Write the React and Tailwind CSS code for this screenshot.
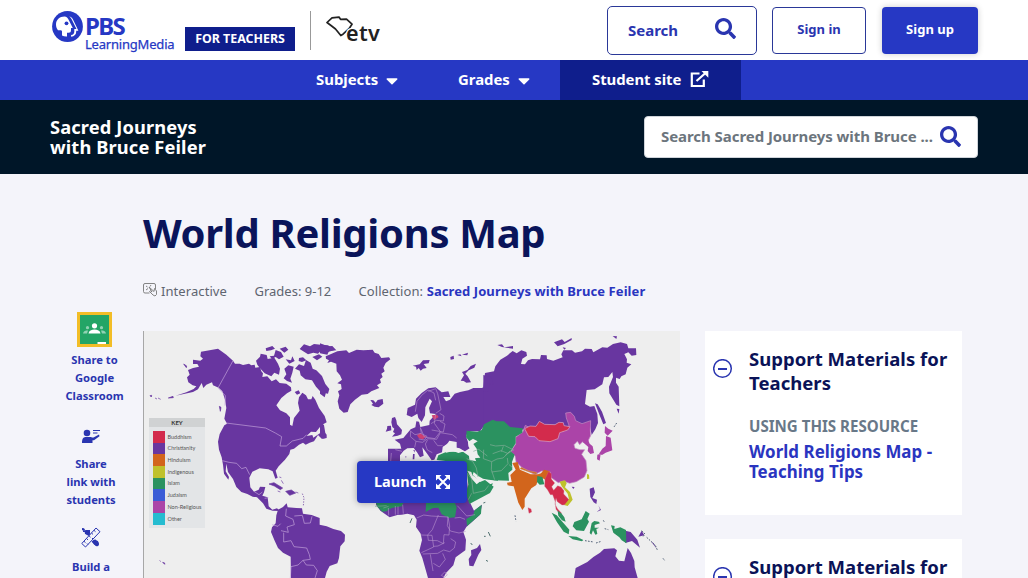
import React from 'react';
import { FaSearch, FaCaretDown } from 'react-icons/fa';

const legend = [
  { name: 'Buddhism', color: 'bg-[#d32b4c]' },
  { name: 'Christianity', color: 'bg-[#6836a0]' },
  { name: 'Hinduism', color: 'bg-[#d2651c]' },
  { name: 'Indigenous', color: 'bg-[#bfc12c]' },
  { name: 'Islam', color: 'bg-[#2b9260]' },
  { name: 'Judaism', color: 'bg-[#3a5cd6]' },
  { name: 'Non-Religious', color: 'bg-[#ab44a8]' },
  { name: 'Other', color: 'bg-[#25bcd0]' },
];

const PbsMark = () => (
  <svg className="h-[31px] w-[31px] shrink-0" viewBox="0 0 31 31">
    <circle cx="15.5" cy="15.5" r="15.4" fill="#2638c4" />
    <path d="M12.500 5.500C7.500 5.500 4 9 4 13.500c0 2.500.8 4.200 2 5.800h2.500c1 0 1.500.5 1.500 1.500v3.700c1.500.7 3 1 5 .9v-3.600h1.500c1.800 0 2.500-.8 2.500-2.500v-2.200h1.800l-3.800-7.600C15.800 7 14.500 5.500 12.500 5.500z" fill="#fff" />
    <path d="M16.600 5.300c1.700.6 2.600 2 3.400 3.600l4.500 9.100h-2.200v2.500c0 2-1 3.200-3.200 3.600v1.700c3.400-.5 5.100-2.200 5.100-5v-1h2.200L21.500 9.500c-1.100-2.300-2.500-4.100-4.900-4.200z" fill="#fff" />
    <circle cx="14.500" cy="12.300" r="1.900" fill="#2638c4" />
  </svg>
);

const EtvLogo = () => (
  <div className="relative ml-[15px] h-[30px] w-[56px]">
    <svg className="absolute left-0 top-[2px] h-[22px] w-[28px]" viewBox="0 0 28 22">
      <path d="M1 6.500L6 1.800l7-.7 1.500 2.200 6-.1 5.500 5-3 4.500-6 5.500-2.200 1.300L9.500 13 5 9.500z" fill="none" stroke="#222" strokeWidth="1.700" strokeLinejoin="round" />
    </svg>
    <span className="absolute left-[20px] top-[7px] bg-transparent text-[21.500px] font-semibold leading-[24px] tracking-[0.300px] text-[#222] [text-shadow:-1px_-1px_0_#fff]">etv</span>
  </div>
);

const Header = () => (
  <header className="flex h-[60px] bg-white pl-[52px] pr-[50px]">
    <div className="flex w-[123px] pt-[11px] text-[#2638c4]">
      <PbsMark />
      <div className="ml-[2px]">
        <p className="h-[26px] pt-[4px] text-[24px] font-bold leading-[22px] tracking-[-1.700px]">PBS</p>
        <p className="text-[13px] leading-[14px] tracking-[-0.200px] [-webkit-text-stroke:0.250px_#2638c4]">LearningMedia</p>
      </div>
    </div>
    <span className="ml-[10px] mt-[27px] flex h-[24px] w-[110px] items-center justify-center bg-[#0f1e8c] text-[12.400px] font-bold text-white">FOR TEACHERS</span>
    <span className="ml-[15px] mt-[11px] h-[39px] w-px bg-[#999]" />
    <div className="pt-[14px]"><EtvLogo /></div>
    <div className="ml-auto flex">
      <button className="mt-[6px] flex h-[49px] w-[150px] items-center justify-between rounded-[5px] border border-[#2a3898] pl-[20px] pr-[20px] text-[15px] font-bold text-[#2a35b0]">
        Search
        <FaSearch className="mb-[4px] h-[21px] w-[21px]" />
      </button>
      <button className="ml-[15px] mt-[7px] h-[47px] w-[94px] rounded-[4px] border border-[#2a3898] pb-[2px] text-[13px] font-bold text-[#2a35b0]">Sign in</button>
      <button className="ml-[16px] mt-[7px] h-[47px] w-[96px] rounded-[4px] bg-[#2638c4] pb-[2px] text-[13px] font-bold text-white shadow-[0_0_6px_rgba(0,0,0,0.2)]">Sign up</button>
    </div>
  </header>
);

const Navbar = () => (
  <nav className="flex h-[40px] bg-[#2638c4] pl-[316px] text-[14.900px] font-bold text-white">
    <div className="flex w-[142px] items-center pb-[2px]">
      Subjects <FaCaretDown className="ml-[5px] mt-[3px] h-[19px] w-[18px]" />
    </div>
    <div className="flex w-[102px] items-center pb-[2px]">
      Grades <FaCaretDown className="ml-[5px] mt-[3px] h-[19px] w-[18px] shrink-0" />
    </div>
    <div className="flex w-[181px] items-center bg-[#0f1e8c] pb-[2px] pl-[32px] tracking-[-0.050px]">
      Student site
      <svg className="ml-[9px] h-[18px] w-[20px]" viewBox="0 0 20 18" fill="none" stroke="#fff" strokeWidth="2.200">
        <path d="M9.500 3.500H1.800v12.500h12V9.500M6.500 11L15.500 3" />
        <path d="M11.500 1h6.800v6.800z" fill="#fff" stroke="none" />
      </svg>
    </div>
  </nav>
);

const CollectionBar = () => (
  <section className="flex h-[74px] items-start justify-between bg-[#001628] pl-[50px] pr-[50px]">
    <h2 className="mt-[17px] text-[18.300px] font-bold leading-[20px] tracking-[0.120px] text-white">
      Sacred Journeys<br />with Bruce Feiler
    </h2>
    <div className="mt-[16px] flex h-[42px] w-[334px] items-center rounded-[4px] border border-[#cfd4da] bg-white pb-[2px] pl-[16px] text-[15px] font-bold tracking-[-0.060px] text-[#6c757d]">
      <span className="w-[272px] whitespace-nowrap">Search Sacred Journeys with Bruce ...</span>
      <FaSearch className="ml-[7px] h-[21px] w-[21px] shrink-0 text-[#2a35b0]" />
    </div>
  </section>
);

const ShareTools = () => (
  <aside className="mt-[138px] flex w-[143px] flex-col text-center text-[11.200px] font-bold leading-[18px] text-[#2a35b0]">
    <div className="ml-[47px] flex w-[95px] flex-col items-center">
      <svg className="h-[35px] w-[35px]" viewBox="0 0 35 35">
        <path d="M0 0h35v35H0z" fill="#f2bd27" />
        <path d="M3 3h29v29H3z" fill="#23a566" />
        <g fill="#fff">
          <circle cx="17.500" cy="13.800" r="2.600" />
          <path d="M11.500 21.500c.5-3 3-4 6-4s5.500 1 6 4z" />
          <path d="M20.500 30h8.500v2h-8.500z" />
          <g opacity=".5">
            <circle cx="10.500" cy="15.700" r="1.600" />
            <circle cx="24.500" cy="15.700" r="1.600" />
            <path d="M6 21.500c.4-2.500 2.500-3 5-3l-1 3zM29 21.500c-.4-2.500-2.500-3-5-3l1 3z" />
          </g>
        </g>
      </svg>
      <p className="mt-[4px]">Share to<br />Google<br />Classroom</p>
    </div>
    <div className="ml-[43px] mt-[24px] flex w-[96px] flex-col items-center">
      <svg className="h-[15px] w-[18px]" viewBox="0 0 18 15" fill="#2a35b0">
        <circle cx="5" cy="4" r="3.300" />
        <path d="M0 14c0-4 1-6 4-6h4c1.500 0 2 .8 3.500.5L17 5.500l.5 1.700-5.500 4H10.500V14z" />
        <path d="M11 1.500h7M11 4h4.500" stroke="#2a35b0" strokeWidth="1" />
      </svg>
      <p className="mt-[11px]">Share<br />link with<br />students</p>
    </div>
    <div className="ml-[43px] mt-[17px] flex w-[96px] flex-col items-center">
      <svg className="h-[22px] w-[20px]" viewBox="0 0 20 22" fill="#2a35b0">
        <path d="M1 2l2 .2 1 1.600L2.800 5 1 4zM5 4h4v3.500L7 9 4 8V6H2V5zM13 14l4 1 1 4-2 1.500-3-2-2-3z" />
        <path d="M.8 17.500L15 2l4 3.700L4.500 21z" fill="#f4f4fa" stroke="#2a35b0" strokeWidth="1" />
        <path d="M3 15.300l1.500 1.300M5.500 12.500l1.500 1.400M8 9.800l1.500 1.400M10.500 7l1.500 1.400M13 4.300l1.500 1.400M7 18.500l-1-1M12 13l-1-1" stroke="#2a35b0" strokeWidth="1" />
        <path d="M5 4l4.500 4-2 2-4-3zM10.500 15.500c1 0 2.500-2.500 4-2l3.500 3.500-1 3h-2z" />
      </svg>
      <p className="mt-[10px]">Build a<br />Lesson</p>
    </div>
  </aside>
);

// 3 units per pixel; the inner groups shift Europe/Africa and Asia to their place
const WorldMap = () => (
  <svg className="block h-[247px] w-[537px]" viewBox="0 9 1611 741" strokeLinejoin="round">
    <g fill="#6836a0">
      <path d="M98 203L130 193 152 183 160 175 149 172 136 163 132 148 140 140 135 126 150 120 168 116 163 108 150 108 150 95 172 98 180 92 172 85 174 71 225 62 250 80 270 98 276 107 290 107 300 111 318 107 325 112 335 110 337 119 351 117 355 130 360 136 358 147 373 145 386 160 399 154 410 165 430 167 444 178 445 188 432 196 415 210 400 232 411 247 430 256 441 268 441 290 448 294 453 270 470 248 465 225 468 208 478 194 489 202 495 214 505 214 509 204 517 215 528 240 545 264 551 283 535 292 519 312 504 311 491 324 508 321 511 329 535 313 548 318 548 330 536 332 525 321 513 340 500 344 488 350 480 344 468 350 453 362 442 365 439 378 426 395 407 415 398 428 404 449 397 452 389 430 376 424 350 421 328 431 319 449 322 478 333 491 347 485 351 476 367 477 363 493 358 503 374 508 377 535 388 545 402 541 411 549 389 548 370 542 360 526 342 508 329 506 313 498 295 492 280 477 270 453 255 432 250 407 248 430 258 447 256 455 243 437 240 410 236 388 228 365 225 341 230 318 244 292 252 287 244 272 250 240 246 215 238 190 227 179 210 172 207 163 190 170 181 180 176 165 165 184 150 192Z" />
      <path d="M339 98l12-12 2-9 18 4 3 12 20-4 11 18 6 15-3 18-14-6-9 11-20-9-14-15-8-11zM368 61l20-7 8 8-12 5-14 2zM380 85l13-2 5-17 16 6 8 14-14 8-10-7-12 5zM410 62l18-6 8 9-12 9zM428 94l16 3 4-12 7 14-16 8zM470 63l13-14 18 6 12-7 20 2 22 2 20 14-30 9-12-6-8 8-14-3-16 5zM424 122l12-10 16 4-4 18-6 18 5 12-15-5-10-8 8-12zM456 122l12-13 15 5 6-18 14 8 6 18 11 5 17 17 10 24 12 15-4 14-21-4-15-17-12-19-20-3-14-12-3-14zM468 90l12-2 10 9-13 5-10-3zM508 87l20-8 10 7-16 11zM455 192l12-5 5 9-10 4z" />
      <path d="M122 108l9 6-1 5zM21 203l4 4 1-5zM36 210l6 3M45 210l8 4M76 210l14-5 1 4zM229 235l5 3-2 12zM50 697l3 4M59 703l6 2v4z" stroke="#6836a0" strokeWidth="2" />
      <path d="M378 468l15-4 26 16-7 5-18-11zM428 490l17-4 13 9-18 7zM404 489l8 3M458 492l8 3M409 447l6 2M415 457l6 10" stroke="#6836a0" strokeWidth="2" />
      <path d="M405 545L420 537 431 526 434 538 460 540 477 541 480 557 506 561 530 570 530 590 551 595 571 603 594 609 606 620 605 640 592 655 588 690 583 706 560 714 551 731 546 750 444 750 443 686 420 674 405 660 395 638 384 612 387 598 398 586 400 562Z" />
    </g>
    <path d="M478 497l5 12-2 25" fill="none" stroke="#8f6cb4" strokeWidth="3" strokeDasharray="4 4" />
    <g fill="none" stroke="#c4a5db" strokeWidth="2">
      <path d="M270 98L225 180 247 203 246 233M249 285L368 300 397 315 416 326 411 354 430 354 448 339 480 331 491 320M238 398l20 5 23 3 15 16 13-4 11 22M334 491l14 9 10-8M365 511l11-2M430 542l-2 22 22 10 4 16-22 7 4 16-22-5M454 564l24-2 6 24 18-1 5-20M387 590l18 5 8-8M422 614v28l22-4 9 18 38 4 8 20 3 14-22 3-15 14-21 5-2 35M480 697l10 14 22 1 11 16-7 22" />
    </g>
    <g transform="translate(531 0)">
      <g fill="#6836a0">
        <path d="M17 85L35 77 52 70 79 67 87 75 110 65 130 67 158 65 164 74 176 78 184 90 207 88 211 94 197 105 190 119 194 130 184 137 188 147 180 154 183 164 171 172 178 180 154 190 143 198 125 200 105 215 91 229 83 252 71 254 58 242 53 220 58 202 54 190 65 183 63 169 52 166 66 155 60 142 50 130 49 107 33 101 22 105 27 97 18 92Z" />
        <path d="M0 46l24 9 13-1 12 13-22 2-5 11-22-4zM0 157l6 12 14 17-6 22-14-11zM0 278l12 14 4 23 4 5v10l-12 2-8-9zM151 216l9 1 7 7 6-8 15-3 2 14-14 11-12-2-10-5 5-4zM278 113l21-4 10-12 20-1-3 10-15 2 9 12-11 2-7 6-6-8-6 6-2-10zM391 87l10-4 1 10-10 2zM412 81l9-2 4 6zM426 80l18-6-2 8zM422 158l10-16-6-10 16-6 10-12 16-7-5 12-17 8-10 10 7 8 10 18-14 1-8-5z" />
        <path d="M216 270l9-3 4 10 2 12 8 9 7 8-2 13-11 4-17 3 9-10-6-4 4-10-6-5-3-14zM202 294l11-1 1 14-17 4 4-9zM103 385l6 2M112 384l8 4" />
        {/* Europe down to the Mediterranean */}
        <path d="M260 261L263 240 285 230 288 212 305 195 325 181 347 178 365 193 385 190 391 207 370 207 378 220 390 215 404 197 420 192 445 187 460 180 485 180 530 165 540 280 495 290 480 310 445 310 438 325 445 345 450 360 435 370 410 360 410 342 388 338 380 350 368 358 366 373 350 379 343 395 335 397 322 378 307 358 311 383 300 388 291 373 281 360 262 361 251 368 240 382 240 400 204 400 204 362 244 362 240 347 224 335 250 330 272 304 286 298 289 280 297 281 301 297 328 291 329 278 347 258 330 256 327 240 336 220 329 212 316 238 315 262 305 282 295 270 292 257 275 267Z" />
        <path d="M256 385h3l-1 6M279 378h5l-1 16h-5zM280 366h4v8z" />
        <path d="M170 500L440 450 448 520 462 548 486 530 480 560 439 597 430 612 438 635 436 667 407 688 400 712 378 735 370 750 324 750 307 690 298 668 306 636 302 617 288 597 290 575 282 562 262 557 245 560 232 561 209 568 181 548 168 530Z" />
        <path d="M480 648l4 18-9 14-15 35-12-2-2-20 8-12-1-14 18-7z" />
      </g>
      <g fill="#2b9260">
        <path d="M355 382L380 371 430 372 447 384 448 396 470 400 490 392 515 370 540 400 534 458 506 455 489 452 476 445 461 432 458 440 480 462 495 456 521 476 510 495 448 528 438 495 445 470 440 425 430 405 350 396 Z" />
        <path d="M168 525h82l-5 10-30 5-16 10-12 1-15-15zM318 525h52l34-2 6 15-5 30-18 2-22-11-10-20-16 1-22 12zM439 573l20-12 5-14 21-17-2 27-27 24-15 13z" />
      </g>
      <g fill="#cf3e71">
        <path d="M291 322l10-7 8 7 10 3-10 9-12-3zM335 262l16-2 5 7-14 9z" />
      </g>
      <g fill="#eeeeee">
        <path d="M368 357l17-12 14 12 20 4 14 9-18 5-15-6-22 5zM442 428l12 4 3 10 25 17-12 10-15-17z" />
      </g>
      <g fill="none" stroke="#b994cf" strokeWidth="1.800">
        <path d="M286 251l5-31 14-18 19-16 18 9 5 22M325 190l22-8 6 15 10 48-16 11M347 258l-4 28 18 25-16 21-32-5-11-26M301 298l3 18-19 4-14-11M272 309l-1 17 17 14-4 18M288 340l20 3 15-11 27 2 11-20 36 6 13 10M323 335l-7 13 6 18 15 8M341 337l12 16 15 0M333 287l16-10 21 2 2-15-13-8M214 375l-2 25M246 370l-20-5M304 317l17 8-8 11-17-3M335 306l35 6 5-24-15-8" />
        <path d="M205 540l1 22M226 534v26M234 535v25M248 530l2 27M290 570l21-9 23 3 50 3 5 27-2 27-15-1-2 27-18-9-27-1-2-16 14-16 18-44M302 621l34 1 5 35-37 17M308 678l45-2 18-10 18 5 14-11 4-18-15-10M341 655l13-1 20-10M331 679l8 50M340 706l18 11 18-23-8-18M384 566l-2 27 9 16 26 6 20-5M412 533l28 31 25-4M404 570l16-2 15 6M364 742l10-10 8 8-8 8z" />
      </g>
      <g fill="none" stroke="#83ad98" strokeWidth="2">
        <path d="M440 392l18 8 11 20 5 27M438 432l17 21 5 43 34-8 14-18M455 496l-10 19M165 535l35-2M190 540l16-5M467 395l13-31 18-16 23-6 20 7M516 398l-11 21 12 31" />
      </g>
      <path d="M270 585l6-14M492 625h5M505 612l6 13M498 697l6 3M452 645l5 6M490 525l6-2" stroke="#507070" strokeWidth="3" />
    </g>
    <g transform="translate(1041 0)">
      <g fill="#6836a0">
        <path d="M-20 176L-15 135 12 130 16 115 31 95 51 83 68 69 80 76 94 67 109 72 111 83 97 92 93 108 105 109 114 97 126 93 150 94 153 81 170 82 171 93 190 98 218 88 214 79 220 67 246 67 255 74 276 70 285 62 305 63 310 73 337 58 352 59 369 48 392 43 411 48 415 61 438 61 439 81 425 83 415 73 403 78 411 94 410 104 424 109 412 119 407 139 394 145 389 153 378 149 378 164 386 176 388 235 379 230 358 196 357 176 369 147 367 132 355 147 342 148 337 169 314 184 290 186 285 228 300 236 313 234 322 258 324 285 316 304 305 321 298 285 275 290 220 310 -20 300Z" />
        <path d="M192 43l24-9 8 8 21-12v6l-22 12-20 7zM22 51l14-2 7 9 26-4v8l-33-5zM218 58l10 2-5 5zM368 24l13 1-2 8zM315 226l8 3 13 22 12 34-8 4-13-32zM380 242l8 1-2 14zM404 193l16 3z" />
        <path d="M-20 141l25 7 5 24-11-5-5 25-14-3z" />
        <path d="M252 750l5-30 35-18 18-15 20-13 12-11 31-2 8 6-5 18 11 13 16 2 10-40 10 15 10 24 1 19 9 32zM299 482l12-4 4 15-8 17 14 5-2 13-8-5-10-16zM325 532l8 14-13 6 10-8zM292 537l9-14M406 608l16 4 20 23 8 24-24-20-20 6zM455 608l8 14-18 4zM470 628l10 7M483 640l8 6 10 18M520 690l5 10M499 728l9 14M245 476l9 1-4 6z" />
      </g>
      <g fill="#ab44a8" stroke="#c48fc4" strokeWidth="2">
        <path d="M62 371L77 348 77 328 98 312 106 292 130 305 220 310 237 292 229 270 227 255 242 253 253 265 257 278 276 287 302 278 301 306 302 323 291 345 278 341 269 350 262 340 252 350 255 361 270 365 284 365 275 379 288 398 291 428 283 447 259 461 239 466 220 459 205 464 184 449 180 431 155 429 135 440 97 420 78 401 75 383Z" />
      </g>
      <path d="M277 341l16-9 6 15 9 8 4 20-11 3-8-9 2-12zM345 294l10 8 13 6-15 15-9-9zM348 324l14 5 5 38-20 7-11 7-9-4 10-15 10-8zM322 380l10-3-3 21-8-4z" fill="#ab44a8" />
      <path d="M104 302l16-8 18 1 10-15 16 9 31 1 12-7 13 1 2 9 18 3-7 10-24 8-5 18-24 9-33-3-12-12-19-1z" fill="#d32b4c" stroke="#d8abc8" strokeWidth="2" />
      <path d="M-72 328L-70 308 -38 311 -25 306 -18 289 -5 282 8 275 20 280 42 280 60 297 98 301 97 314 77 326 77 346 62 370 74 380 66 402 67 425 55 435 57 458 12 457 -10 450 -20 430 -36 415 -45 390 -40 365Z" fill="#2b9260" />
      <path d="M-66 342l15-10 14 8-13 8 10 14 3 17 8 10-19 2-7-20-10-16z" fill="#eeeeee" />
      <path d="M0 350l17 4 26-2 28 14-18 10-20-8-25 9M60 370l-21 20-18 3-16 8-25-9 1-27M34 371l6-16M46 382l16-14M5 401l-1 24 10 30M52 390l2 17-20 21-29 4M57 410l10 8M-50 370l16-6 26 20" fill="none" stroke="#83ad98" strokeWidth="2" />
      <g fill="#d2651c">
        <path d="M67 405l16-3 7 23 32 14 22 0 9-3 9-11 18 5-14 25-8-4-4 12-12-2-3 10-15 10-20 31 0 24-7 10-12-22-14-49-18-3-2-8 14-2-4-21 16-16z" />
      </g>
      <path d="M90 422l25 9 25 8v-6l-24-5-22-10z" fill="#d2651c" stroke="#c6a080" strokeWidth="1.500" />
      <path d="M142 444l15 3 6 22-14 1-8-8z" fill="#2b9260" />
      <path d="M176 430l8 7 0 16 10 12-9 11 6 11 12-14 10 4 9 11-1 10 17 18-4 14-18 1-14-10-4-10-3 18 8 14 12 13-5 2-12-14-3-25-7-19-7 0-8-14-9-11 1-22zM114 539l9 4 2 9-8 4z" fill="#d32b4c" stroke="#d07089" strokeWidth="1" />
      <path d="M209 461l16-4 5 9-5 12 15 14 8 23-15 19-10-3 14-17-4-17-18-22zM291 438l6 2 1 12-7 1z" fill="#bfc12c" />
      <g fill="#2b9260">
        <path d="M185 554l15 8 38 43-2 14-15-8-20-28zM203 548l11 8 9 12 4 13-11-4-11-14zM253 582l22-8 12-25 12 8-7 16 5 8-15 28-23-2-11-12zM235 624l25 2 20 10-4 4-28-6zM305 585l8-6 13 2 4 5-16 5 0 8 14 0-9 4 3 15-6 2-7-13-5 13-5-5zM363 592l11 2-1 9 18-5 17 8 1 40-14-9-7-9-18-14zM341 576l3 11M343 602l12 2M-5 470l14-4-10 20zM282 637l12 3M298 639l10 3" />
      </g>
      <path d="M75 562l3 18M285 638l26 4M318 645l16-5M340 577l4 7M344 602l11 3M455 608l10 10-6 8M470 628l26 24 6 14M519 691l6 8M380 285l-8 12" fill="none" stroke="#536278" strokeWidth="3" strokeDasharray="5 4" />
    </g>
    <path d="M1 9v741" stroke="#999" strokeWidth="3" />
  </svg>
);

const MapPreview = () => (
  <div className="relative h-[247px] w-[537px] overflow-hidden bg-[#eeeeee]">
    <WorldMap />
    <div className="absolute left-[6px] top-[87px] h-[110px] w-[56px] bg-[#e3e5e7]">
      <p className="h-[9px] bg-[#d0d2d3] text-center font-['Lato'] text-[6px] font-bold leading-[9px] text-[#333]">KEY</p>
      <ul className="pl-[4px] pt-[4px]">
        {legend.map((item) => (
          <li key={item.name} className="flex h-[11.700px] items-center font-['Lato'] text-[5.500px] text-[#555]">
            <span className={`mr-[3px] h-[11.700px] w-[11.500px] ${item.color}`} />
            {item.name}
          </li>
        ))}
      </ul>
    </div>
    <button className="absolute left-[214px] top-[130px] flex h-[42px] w-[110px] items-center rounded-[4px] bg-[#2638c4] pl-[17px] text-[14.500px] font-bold text-white shadow-[0_0_7px_rgba(0,0,0,0.35)]">
      Launch
      <svg className="ml-[9px] h-[14px] w-[14px]" viewBox="0 0 14 14">
        <path d="M2.500 2.500l9 9M11.500 2.500l-9 9" stroke="#fff" strokeWidth="2" />
        <path d="M0 0h5.500L0 5.500zM14 0v5.500L8.500 0zM0 14V8.500L5.500 14zM14 14H8.500L14 8.500z" fill="#fff" />
      </svg>
    </button>
  </div>
);

const SupportCard = ({ audience, link }) => (
  <div className="mb-[24px] flex h-[184px] w-[257px] bg-white pl-[8px] pt-[16px]">
    <svg className="mt-[12px] h-[20px] w-[20px]" viewBox="0 0 20 20" fill="none" stroke="#2a35b0">
      <circle cx="9.500" cy="9.500" r="8.800" strokeWidth="1.500" />
      <path d="M5 10h9" strokeWidth="2" />
    </svg>
    <div className="ml-[16px]">
      <h3 className="text-[18.500px] font-bold leading-[24px] tracking-[0.040px] text-[#0a1257]">Support Materials for<br />{audience}</h3>
      <p className="mt-[21px] text-[15.100px] font-bold leading-[20px] text-[#687888]">USING THIS RESOURCE</p>
      <p className="mt-[6px] w-[190px] text-[16.900px] font-bold leading-[20px] tracking-[0.050px] text-[#2a35c0]">{link}</p>
    </div>
  </div>
);

const App = () => {
  return (
    <div className="h-[578px] w-[1028px] overflow-hidden bg-[#f4f4fa] font-['Noto_Sans',sans-serif]">
      <Header />
      <Navbar />
      <CollectionBar />
      <main className="flex">
        <ShareTools />
        <div className="w-[562px]">
          <h1 className="mt-[34px] text-[40px] font-bold leading-[50px] tracking-[-0.300px] text-[#0a145a]">World Religions Map</h1>
          <div className="mt-[24px] flex h-[20px] items-center text-[13px] text-[#5f6570]">
            <svg className="mb-[4px] mr-[3px] h-[14px] w-[15px]" viewBox="0 0 15 14" fill="none" stroke="#777" strokeWidth=".9">
              <path d="M6.500 10H2Q.5 10 .5 8.500V2Q.5.500 2 .5h9q1.500 0 1.500 1.500v4M3 3l1.500 1M8 2L7 3.500M3 7l2-1.500M6 4l5 4.500.5-3 2 2.500v3.500L12 13l-2-1-3.500-3.500 1-.7L9 9z" />
            </svg>
            <span className="w-[93.500px] tracking-[0.080px]">Interactive</span>
            <span className="w-[104px]">Grades: 9-12</span>
            <span className="whitespace-nowrap tracking-[0.080px]">Collection: <b className="text-[#2a35c0]">Sacred Journeys with Bruce Feiler</b></span>
          </div>
          <div className="mt-[29px]">
            <MapPreview />
          </div>
        </div>
        <div className="pt-[157px]">
          <SupportCard audience="Teachers" link="World Religions Map - Teaching Tips" />
          <SupportCard audience="Students" link="World Religions Map" />
        </div>
      </main>
    </div>
  );
};

export default App;
